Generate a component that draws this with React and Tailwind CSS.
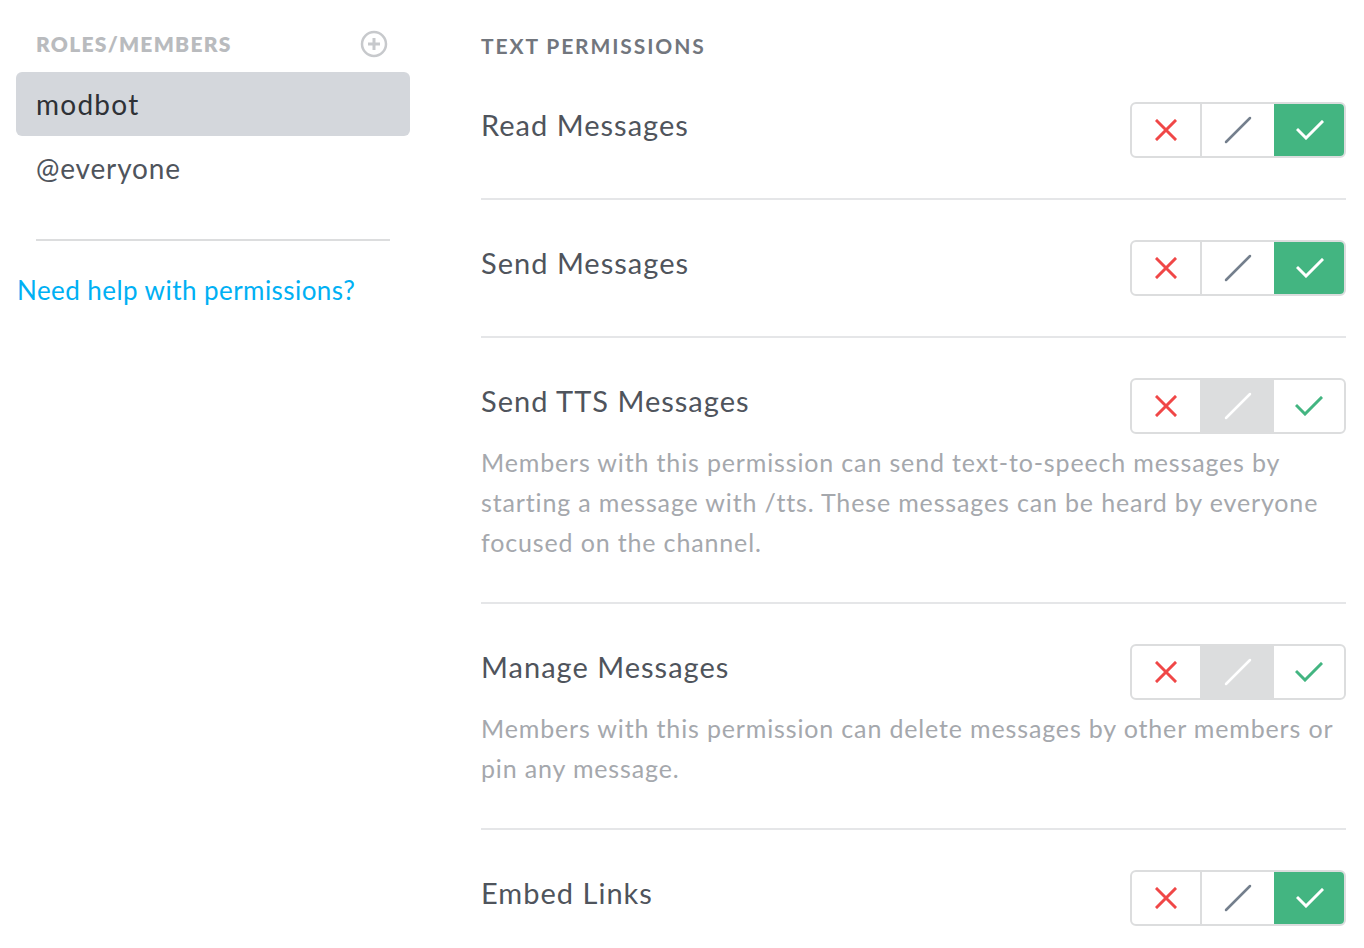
import React from 'react';

const font = { fontFamily: 'Lato, "Open Sans", sans-serif' };

const permissions = [
    { name: 'Read Messages', state: 'allow' },
    { name: 'Send Messages', state: 'allow' },
    {
        name: 'Send TTS Messages',
        state: 'neutral',
        desc: [
            'Members with this permission can send text-to-speech messages by',
            'starting a message with /tts. These messages can be heard by everyone',
            'focused on the channel.'
        ]
    },
    {
        name: 'Manage Messages',
        state: 'neutral',
        desc: [
            'Members with this permission can delete messages by other members or',
            'pin any message.'
        ]
    },
    { name: 'Embed Links', state: 'allow' }
];

const DenyIcon = () => (
    <svg width="22" height="22" viewBox="0 0 22 22" fill="none">
        <path d="M2 2L20 20M20 2L2 20" stroke="#f04747" strokeWidth="3" strokeLinecap="square" />
    </svg>
);

const SlashIcon = ({ color }) => (
    <svg width="28" height="28" viewBox="0 0 28 28" fill="none">
        <path d="M2 26L26 2" stroke={color} strokeWidth="2.5" strokeLinecap="round" />
    </svg>
);

const CheckIcon = ({ color }) => (
    <svg width="28" height="20" viewBox="0 0 28 20" fill="none">
        <path d="M2 10L10 18L26 2" stroke={color} strokeWidth="3" strokeLinecap="square" />
    </svg>
);

const Toggle = ({ state }) => {
    const allow = state === 'allow';
    return (
        <div className="flex h-[56px] w-[216px] shrink-0 rounded-[6px] border-2 border-[#dcddde] overflow-hidden bg-white">
            <div className="w-[70px] flex items-center justify-center border-r-2 border-[#dcddde]">
                <DenyIcon />
            </div>
            <div className={`w-[72px] flex items-center justify-center ${allow ? '' : 'bg-[#dcddde]'}`}>
                <SlashIcon color={allow ? '#747f8d' : '#ffffff'} />
            </div>
            <div className={`flex-1 flex items-center justify-center ${allow ? 'bg-[#43b581] -my-[2px] -mr-[2px]' : ''}`}>
                <CheckIcon color={allow ? '#ffffff' : '#43b581'} />
            </div>
        </div>
    );
};

export default function App() {
    return (
        <div className="flex bg-white min-h-[948px] w-[1364px] overflow-hidden" style={font}>
            {/* Sidebar */}
            <div className="w-[394px] ml-4 shrink-0">
                <div className="flex items-center justify-between pl-5 pr-[22px] pt-[30px] h-[58px]">
                    <span className="text-[21px] font-extrabold uppercase text-[#b9bbbe] tracking-[0.06em]">Roles/Members</span>
                    <svg width="28" height="28" viewBox="0 0 28 28" fill="none">
                        <circle cx="14" cy="14" r="12" stroke="#c7c9cc" strokeWidth="2.5" />
                        <path d="M14 8V20M8 14H20" stroke="#c7c9cc" strokeWidth="3" />
                    </svg>
                </div>
                <div className="mt-[14px] h-[64px] rounded-[6px] bg-[#d4d7dc] flex items-center pl-5 text-[28px] tracking-[0.045em] text-[#2e3136]">
                    modbot
                </div>
                <div className="h-[64px] flex items-center pl-5 text-[28px] tracking-[0.03em] text-[#4f545c]">
                    @everyone
                </div>
                <div className="mx-5 mt-[39px] h-[2px] bg-[#dcddde]" />
                <div className="mt-[30px] pl-px text-[26px] tracking-[0.017em] text-[#00b0f4]">
                    Need help with permissions?
                </div>
            </div>

            {/* Permissions */}
            <div className="ml-[71px] w-[865px]">
                <div className="pt-[30px] text-[21px] font-bold uppercase tracking-[0.09em] text-[#72767d] leading-[32px]">
                    Text Permissions
                </div>
                {permissions.map((p, i) => (
                    <div
                        key={p.name}
                        className={`pt-[40px] pb-[40px] ${i < permissions.length - 1 ? 'border-b-2 border-[#e5e6e8]' : ''}`}
                    >
                        <div className="flex items-center justify-between h-[56px]">
                            <span className="text-[29px] tracking-[0.035em] text-[#4f545c] -mt-[11px]">{p.name}</span>
                            <Toggle state={p.state} />
                        </div>
                        {p.desc && (
                            <div className="mt-[8px] text-[25px] leading-[40px] tracking-[0.034em] text-[#a5a8ad]">
                                {p.desc.map((line) => (
                                    <div key={line} className="whitespace-nowrap">{line}</div>
                                ))}
                            </div>
                        )}
                    </div>
                ))}
            </div>
        </div>
    );
}
